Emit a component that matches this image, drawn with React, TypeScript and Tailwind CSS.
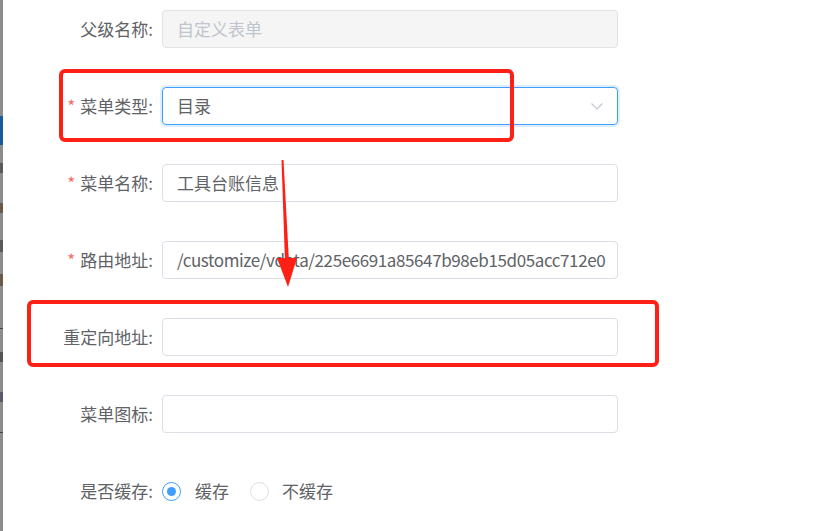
import React from "react";

const font = { fontFamily: '"Noto Sans CJK SC", "Noto Sans", sans-serif' };

function Label({ text, required }: { text: string; required?: boolean }) {
  return (
    <div className="w-[154px] shrink-0 text-right text-[17px] text-[#606266] leading-[38px] pr-[1px]">
      {required && <span className="text-[#f56c6c] mr-[5px]">*</span>}
      {text}:
    </div>
  );
}

function Row({ children }: { children: React.ReactNode }) {
  return <div className="flex items-center h-[38px] gap-[8px]">{children}</div>;
}

function Input({ value, disabled, tight }: { value?: string; disabled?: boolean; tight?: boolean }) {
  return (
    <div
      className={
        "w-[456px] h-[38px] rounded-[4px] border px-[14px] flex items-center text-[17px] overflow-hidden whitespace-nowrap " +
        (tight ? "tracking-[-0.4px] " : "") +
        (disabled
          ? "bg-[#f5f5f5] border-[#e2e2e2] text-[#c0c4cc]"
          : "bg-white border-[#dcdfe6] text-[#606266]")
      }
    >
      {value}
    </div>
  );
}

export default function App() {
  return (
    <div className="relative w-[839px] h-[531px] bg-white overflow-hidden flex" style={font}>
      {/* left edge strip */}
      <div className="relative w-[3px] h-full bg-[#8c8c8c] shrink-0">
        <div className="absolute left-0 top-[116px] w-[3px] h-[29px] bg-[#1a5aa0]" />
        <div className="absolute left-0 top-[163px] w-[3px] h-[10px] bg-[#5a5a5a]" />
        <div className="absolute left-0 top-[203px] w-[3px] h-[10px] bg-[#6a5a4a]" />
        <div className="absolute left-0 top-[240px] w-[3px] h-[12px] bg-[#5a5a5a]" />
        <div className="absolute left-0 top-[274px] w-[3px] h-[12px] bg-[#6a5a4a]" />
        <div className="absolute left-0 top-[328px] w-[3px] h-[1px] bg-[#444]" />
        <div className="absolute left-0 top-[352px] w-[3px] h-[10px] bg-[#555]" />
        <div className="absolute left-0 top-[392px] w-[3px] h-[10px] bg-[#5a5a6a]" />
        <div className="absolute left-0 top-[432px] w-[3px] h-[1px] bg-[#444]" />
      </div>

      <div className="flex flex-col pt-[10px] gap-[39px] -ml-[3px]">
        <Row>
          <Label text="父级名称" />
          <Input value="自定义表单" disabled />
        </Row>
        <Row>
          <Label text="菜单类型" required />
          <div className="w-[456px] h-[38px] rounded-[4px] border border-[#409eff] shadow-[0_0_0_2px_rgba(64,158,255,0.18)] px-[14px] flex items-center justify-between text-[17px] text-[#606266]">
            <span>目录</span>
            <svg width="14" height="14" viewBox="0 0 14 14" className="mr-[-1px]">
              <path d="M1.5 4.5 L7 10 L12.5 4.5" fill="none" stroke="#c0c4cc" strokeWidth="1.2" />
            </svg>
          </div>
        </Row>
        <Row>
          <Label text="菜单名称" required />
          <Input value="工具台账信息" />
        </Row>
        <Row>
          <Label text="路由地址" required />
          <Input value="/customize/vdata/225e6691a85647b98eb15d05acc712e0" tight />
        </Row>
        <Row>
          <Label text="重定向地址" />
          <Input />
        </Row>
        <Row>
          <Label text="菜单图标" />
          <Input />
        </Row>
        <Row>
          <Label text="是否缓存" />
          <div className="flex items-center text-[17px] text-[#606266]">
            <span className="w-[19px] h-[19px] rounded-full border border-[#409eff] flex items-center justify-center">
              <span className="w-[9px] h-[9px] rounded-full bg-[#409eff]" />
            </span>
            <span className="ml-[14px]">缓存</span>
            <span className="ml-[21px] w-[19px] h-[19px] rounded-full border border-[#dcdfe6] bg-white" />
            <span className="ml-[13px]">不缓存</span>
          </div>
        </Row>
      </div>

      {/* annotations */}
      <div className="absolute left-[59px] top-[69px] w-[455px] h-[73px] border-[4px] border-[#ff2015] rounded-[6px]" />
      <div className="absolute left-[27px] top-[300px] w-[632px] h-[67px] border-[4px] border-[#ff2015] rounded-[6px]" />
      <svg className="absolute left-0 top-0" width="839" height="531" viewBox="0 0 839 531">
        <polygon points="281.5,160 283.5,160 289,262 285,262" fill="#ff2015" />
        <polygon points="277,258 297,258 288,287" fill="#ff2015" />
      </svg>
    </div>
  );
}
